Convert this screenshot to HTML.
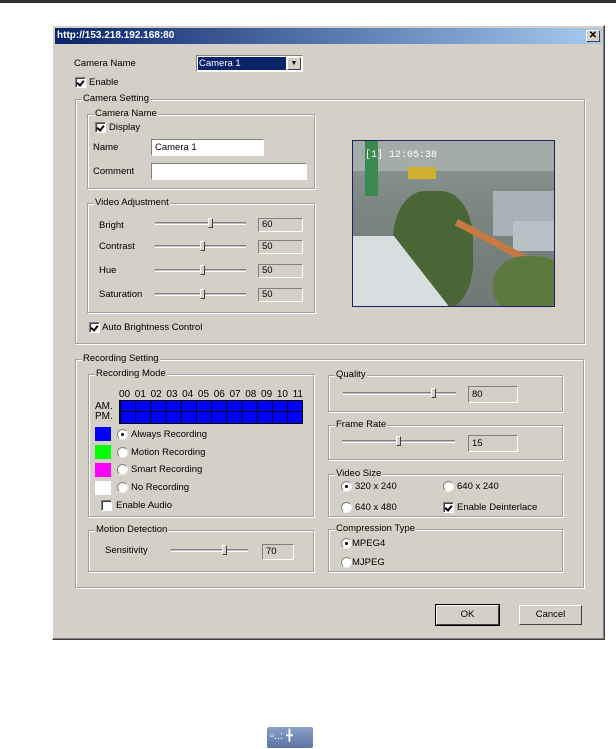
<!DOCTYPE html>
<html><head><meta charset="utf-8"><style>
*{margin:0;padding:0;box-sizing:border-box}
body{width:616px;height:749px;background:#fff;position:relative;overflow:hidden;font-family:"Liberation Sans",sans-serif;font-size:9.5px;color:#000}
.a{position:absolute}
.t{position:absolute;white-space:nowrap;line-height:11px}
.g{position:absolute;border:1px solid #a0a0a0;box-shadow:1px 1px 0 #fff, inset 1px 1px 0 #fff}
.gl{position:absolute;top:-7px;left:6px;background:#d4d0c8;padding:0 1px;line-height:11px;white-space:nowrap}
.cb{position:absolute;width:11px;height:11px;background:#fff;border:1px solid #808080;border-right-color:#fff;border-bottom-color:#fff;box-shadow:inset 1px 1px 0 #404040}
.cb.k::after{content:"";position:absolute;left:2px;top:1px;width:3px;height:5px;border:solid #000;border-width:0 2px 2px 0;transform:rotate(40deg)}
.rd{position:absolute;width:11px;height:11px;border-radius:50%;background:#fff;border:1px solid #808080;border-right-color:#eee;border-bottom-color:#eee}
.rd.k::after{content:"";position:absolute;left:3px;top:3px;width:3px;height:3px;border-radius:50%;background:#000}
.sl{position:absolute;height:3px;border-top:1px solid #808080;border-bottom:1px solid #fff;background:#c0c0c0}
.th{position:absolute;width:5px;height:10px;top:-5px;background:#d4d0c8;border:1px solid #fff;border-right-color:#404040;border-bottom-color:#404040}
.vb{position:absolute;border:1px solid #808080;border-right-color:#fff;border-bottom-color:#fff;padding-left:3px;line-height:12px}
.btn{position:absolute;border:1px solid #fff;border-right-color:#404040;border-bottom-color:#404040;text-align:center;line-height:18px;background:#d4d0c8}
</style></head><body>
<div class="a" style="left:0;top:0;width:616px;height:3px;background:#333"></div>
<div class="a" style="left:52px;top:25px;width:553px;height:615px;background:#d4d0c8;border:1px solid #fff;border-right-color:#404040;border-bottom-color:#404040;box-shadow:inset -1px -1px 0 #808080"></div>
<div class="a" style="left:55px;top:28px;width:547px;height:16px;background:linear-gradient(90deg,#0a246a,#a6caf0)"></div>
<div class="t" style="left:57px;top:30px;color:#fff;font-weight:bold;font-size:10px">http://153.218.192.168:80</div>
<div class="a" style="left:586px;top:30px;width:14px;height:12px;background:#d4d0c8;border:1px solid #fff;border-right-color:#404040;border-bottom-color:#404040;font-size:10px;line-height:10px;text-align:center;font-weight:bold">✕</div>

<div class="t" style="left:74px;top:58px">Camera Name</div>
<div class="a" style="left:196px;top:55px;width:107px;height:17px;background:#fff;border:1px solid #808080;border-right-color:#fff;border-bottom-color:#fff"></div>
<div class="a" style="left:198px;top:57px;width:88px;height:13px;background:#0a246a;color:#fff;line-height:13px;padding-left:1px">Camera 1</div>
<div class="a" style="left:287px;top:57px;width:14px;height:13px;background:#d4d0c8;border:1px solid #fff;border-right-color:#404040;border-bottom-color:#404040;font-size:7px;text-align:center;line-height:11px">▼</div>
<div class="cb k" style="left:75px;top:77px"></div><div class="t" style="left:89px;top:77px">Enable</div>

<div class="g" style="left:75px;top:99px;width:510px;height:245px"><span class="gl">Camera Setting</span></div>
<div class="g" style="left:87px;top:114px;width:228px;height:75px"><span class="gl">Camera Name</span></div>
<div class="cb k" style="left:95px;top:122px"></div><div class="t" style="left:109px;top:122px">Display</div>
<div class="t" style="left:93px;top:142px">Name</div>
<div class="vb" style="left:151px;top:139px;width:113px;height:17px;background:#fff;line-height:15px">Camera 1</div>
<div class="t" style="left:93px;top:166px">Comment</div>
<div class="vb" style="left:151px;top:163px;width:156px;height:17px;background:#fff"></div>

<div class="g" style="left:87px;top:203px;width:228px;height:110px"><span class="gl">Video Adjustment</span></div>
<div class="t" style="left:99px;top:220px">Bright</div><div class="sl" style="left:155px;top:222px;width:91px"><div class="th" style="left:53px"></div></div><div class="vb" style="left:258px;top:218px;width:45px;height:14px">60</div>
<div class="t" style="left:99px;top:241px">Contrast</div><div class="sl" style="left:155px;top:245px;width:91px"><div class="th" style="left:45px"></div></div><div class="vb" style="left:258px;top:240px;width:45px;height:14px">50</div>
<div class="t" style="left:99px;top:265px">Hue</div><div class="sl" style="left:155px;top:269px;width:91px"><div class="th" style="left:45px"></div></div><div class="vb" style="left:258px;top:264px;width:45px;height:14px">50</div>
<div class="t" style="left:99px;top:289px">Saturation</div><div class="sl" style="left:155px;top:293px;width:91px"><div class="th" style="left:45px"></div></div><div class="vb" style="left:258px;top:288px;width:45px;height:14px">50</div>
<div class="cb k" style="left:89px;top:322px"></div><div class="t" style="left:102px;top:322px">Auto Brightness Control</div>

<div class="a" style="left:352px;top:140px;width:203px;height:167px;border:1px solid #202060;overflow:hidden;background:linear-gradient(180deg,#8e9894 0%,#7c8682 40%,#6f7874 100%)">
<div class="a" style="left:0;top:0;width:203px;height:30px;background:#a3aca8"></div>
<div class="a" style="left:12px;top:0;width:13px;height:55px;background:#3a8a50"></div>
<div class="a" style="left:55px;top:26px;width:28px;height:12px;background:#d0b030"></div>
<div class="a" style="left:140px;top:50px;width:63px;height:45px;background:#a8b0b8"></div>
<div class="a" style="left:160px;top:80px;width:43px;height:30px;background:#b8c0c6"></div>
<div class="a" style="left:40px;top:50px;width:80px;height:120px;border-radius:40%;background:#4a6636"></div>
<div class="a" style="left:105px;top:78px;width:120px;height:7px;background:#c47a40;transform:rotate(28deg);transform-origin:0 0"></div>
<div class="a" style="left:-30px;top:95px;width:110px;height:100px;background:#d8dde0;transform:skewX(38deg)"></div>
<div class="a" style="left:140px;top:115px;width:75px;height:60px;border-radius:45%;background:#5c7a40"></div>
<div class="t" style="left:12px;top:9px;color:#fff;font-size:10px;font-family:'Liberation Mono',monospace">[1] 12:05:38</div>
</div>

<div class="g" style="left:75px;top:359px;width:509px;height:229px"><span class="gl">Recording Setting</span></div>
<div class="g" style="left:88px;top:374px;width:226px;height:143px"><span class="gl">Recording Mode</span></div>
<div class="t" style="left:119px;top:389px;width:184px;display:flex;justify-content:space-between;font-size:10px"><span>00</span><span>01</span><span>02</span><span>03</span><span>04</span><span>05</span><span>06</span><span>07</span><span>08</span><span>09</span><span>10</span><span>11</span></div>
<div class="t" style="left:95px;top:402px;font-size:10px;line-height:10px">AM.<br>PM.</div>
<div class="a" style="left:119px;top:400px;width:184px;height:24px;background:#0000ff;border:1px solid #000;background-image:linear-gradient(90deg,#000 1px,transparent 1px),linear-gradient(180deg,transparent 10px,#000 10px,#000 11px,transparent 11px);background-size:15.2px 100%,100% 100%"></div>
<div class="a" style="left:95px;top:427px;width:16px;height:14px;background:#0000ff"></div><div class="rd k" style="left:117px;top:429px"></div><div class="t" style="left:131px;top:429px">Always Recording</div>
<div class="a" style="left:95px;top:445px;width:16px;height:14px;background:#00ff00"></div><div class="rd" style="left:117px;top:447px"></div><div class="t" style="left:131px;top:447px">Motion Recording</div>
<div class="a" style="left:95px;top:463px;width:16px;height:14px;background:#ff00ff"></div><div class="rd" style="left:117px;top:464px"></div><div class="t" style="left:131px;top:464px">Smart Recording</div>
<div class="a" style="left:95px;top:481px;width:16px;height:14px;background:#fff"></div><div class="rd" style="left:117px;top:482px"></div><div class="t" style="left:131px;top:482px">No Recording</div>
<div class="cb" style="left:101px;top:500px"></div><div class="t" style="left:116px;top:500px">Enable Audio</div>

<div class="g" style="left:88px;top:530px;width:226px;height:42px"><span class="gl">Motion Detection</span></div>
<div class="t" style="left:105px;top:545px">Sensitivity</div>
<div class="sl" style="left:171px;top:549px;width:77px"><div class="th" style="left:51px"></div></div>
<div class="vb" style="left:262px;top:544px;width:32px;height:16px;line-height:14px">70</div>

<div class="g" style="left:328px;top:375px;width:235px;height:37px"><span class="gl">Quality</span></div>
<div class="sl" style="left:343px;top:392px;width:113px"><div class="th" style="left:88px"></div></div>
<div class="vb" style="left:468px;top:386px;width:50px;height:17px;line-height:15px">80</div>
<div class="g" style="left:328px;top:425px;width:235px;height:35px"><span class="gl">Frame Rate</span></div>
<div class="sl" style="left:342px;top:440px;width:113px"><div class="th" style="left:54px"></div></div>
<div class="vb" style="left:468px;top:435px;width:50px;height:17px;line-height:15px">15</div>
<div class="g" style="left:328px;top:474px;width:235px;height:43px"><span class="gl">Video Size</span></div>
<div class="rd k" style="left:341px;top:481px"></div><div class="t" style="left:355px;top:481px">320 x 240</div>
<div class="rd" style="left:443px;top:481px"></div><div class="t" style="left:457px;top:481px">640 x 240</div>
<div class="rd" style="left:341px;top:502px"></div><div class="t" style="left:355px;top:502px">640 x 480</div>
<div class="cb k" style="left:443px;top:502px"></div><div class="t" style="left:457px;top:502px">Enable Deinterlace</div>
<div class="g" style="left:328px;top:529px;width:235px;height:43px"><span class="gl">Compression Type</span></div>
<div class="rd k" style="left:341px;top:538px"></div><div class="t" style="left:352px;top:538px">MPEG4</div>
<div class="rd" style="left:341px;top:557px"></div><div class="t" style="left:352px;top:557px">MJPEG</div>

<div class="btn" style="left:436px;top:605px;width:63px;height:20px;outline:1px solid #000">OK</div>
<div class="btn" style="left:519px;top:605px;width:63px;height:20px">Cancel</div>

<div class="a" style="left:267px;top:727px;width:46px;height:21px;background:linear-gradient(#8aa0c8,#5c74a4);border-radius:2px"></div>
<div class="t" style="left:270px;top:731px;color:#fff;font-size:11px">▫..: ╋</div>
</body></html>
